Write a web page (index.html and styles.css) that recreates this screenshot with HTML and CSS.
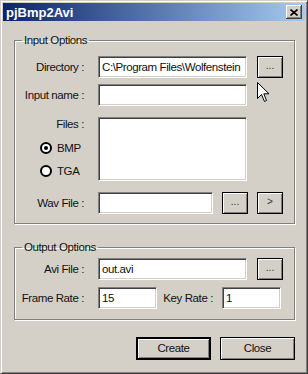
FILE: index.html
```html
<!DOCTYPE html>
<html>
    <head>
        <meta charset="utf-8">
        <title>pjBmp2Avi</title>
        <link rel="stylesheet" href="styles.css">
    </head>
    <body>
        <div class="window">
            <div class="titlebar">
                <span class="title">pjBmp2Avi</span>
                <span class="close-btn">
                    <svg width="8" height="7" viewBox="0 0 8 7">
                        <path d="M0.5 0.5 L7.5 6.5 M7.5 0.5 L0.5 6.5" stroke="#000" stroke-width="1.6" fill="none"/>
                    </svg>
                </span>
            </div>
            <div class="body">
                <!-- 입력 옵션 -->
                <fieldset class="group group-input">
                    <legend>Input Options</legend>
                    <div class="row">
                        <span class="lbl">Directory :</span>
                        <div class="field field-wide">C:\Program Files\Wolfenstein</div>
                        <div class="btn">...</div>
                    </div>
                    <div class="row row-gap">
                        <span class="lbl">Input name :</span>
                        <div class="field field-wide"></div>
                    </div>
                    <div class="row row-files">
                        <div class="lbl-col">
                            <span class="lbl lbl-files">Files :</span>
                            <div class="radio radio-on"><span class="dot"></span>BMP</div>
                            <div class="radio"><span class="dot"></span>TGA</div>
                        </div>
                        <div class="field field-wide listbox"></div>
                    </div>
                    <div class="row row-wav">
                        <span class="lbl">Wav File :</span>
                        <div class="field field-wav"></div>
                        <div class="btn btn-near">...</div>
                        <div class="btn btn-near">&gt;</div>
                    </div>
                </fieldset>

                <!-- 출력 옵션 -->
                <fieldset class="group group-output">
                    <legend>Output Options</legend>
                    <div class="row">
                        <span class="lbl">Avi File :</span>
                        <div class="field field-wide">out.avi</div>
                        <div class="btn">...</div>
                    </div>
                    <div class="row row-rate">
                        <span class="lbl">Frame Rate :</span>
                        <div class="field field-short">15</div>
                        <span class="lbl lbl-key">Key Rate :</span>
                        <div class="field field-short">1</div>
                    </div>
                </fieldset>

                <div class="actions">
                    <div class="btn btn-big btn-default">Create</div>
                    <div class="btn btn-big">Close</div>
                </div>
            </div>

            <svg class="cursor" width="13" height="21" viewBox="0 0 13 21">
                <path d="M0.5 0.5 L0.5 16.5 L4.5 12.5 L7.5 19.5 L9.5 18.5 L6.8 11.8 L12 11.8 Z" fill="#fff" stroke="#000" stroke-width="1"/>
            </svg>
        </div>
    </body>
</html>
```

FILE: styles.css
```css
body {
    margin: 0px;
    font-family: "Liberation Sans", Arial, sans-serif;
    font-size: 11.5px;
    letter-spacing: -0.4px;
    color: #111;
}
.window {
    position: relative;
    width: 308px;
    height: 374px;
    box-sizing: border-box;
    background-color: #d4d0c8;
    border: 1px solid;
    border-color: #d4d0c8 #404040 #404040 #d4d0c8;
    box-shadow: inset 1px 1px 0 #fff, inset -1px -1px 0 #808080;
    padding: 2px;
}
.titlebar {
    height: 18px;
    background-image: linear-gradient(to right, #0a246a, #a6caf0);
    display: flex;
    align-items: center;
    justify-content: space-between;
    padding: 0 3px 0 3px;
    color: #fff;
}
.title {
    font-weight: bold;
    font-size: 13px;
    letter-spacing: 0;
}
.close-btn {
    width: 16px;
    height: 14px;
    box-sizing: border-box;
    background-color: #d4d0c8;
    display: flex;
    align-items: center;
    justify-content: center;
    box-shadow: inset -1px -1px 0 #404040, inset 1px 1px 0 #fff, inset -2px -2px 0 #808080;
}
.body {
    padding: 12px 10px 0 11px;
}
.group {
    margin: 0;
    border: 1px solid #808080;
    box-shadow: 1px 1px 0 #fff, inset 1px 1px 0 #fff;
    padding: 9px 10px 9px 0;
}
.group legend {
    margin-left: 7px;
    padding: 0 2px;
    line-height: 14px;
}
.group-output {
    margin-top: 16px;
    padding-top: 4px;
    padding-bottom: 10px;
}
.row {
    display: flex;
    align-items: center;
    height: 22px;
}
.row-gap {
    margin-top: 6px;
}
.row-files {
    margin-top: 11px;
    height: 64px;
    align-items: flex-start;
}
.row-wav {
    margin-top: 11px;
}
.row-rate {
    margin-top: 7px;
}
.lbl {
    flex: none;
    width: 69px;
    margin-right: 14px;
    text-align: right;
    white-space: nowrap;
}
.lbl-col {
    flex: none;
    width: 83px;
}
.lbl-files {
    display: block;
    line-height: 12px;
    margin-top: 1px;
}
.lbl-key {
    width: 56px;
    margin-right: 9px;
}
.radio {
    display: flex;
    align-items: center;
    height: 14px;
    padding-left: 25px;
    margin-top: 9px;
}
.radio-on {
    margin-top: 11px;
}
.radio .dot {
    width: 12px;
    height: 12px;
    box-sizing: border-box;
    border: 2px solid #000;
    border-radius: 50%;
    background-color: #fff;
    margin-right: 5px;
    position: relative;
}
.radio-on .dot::after {
    content: "";
    position: absolute;
    left: 2px;
    top: 2px;
    width: 4px;
    height: 4px;
    border-radius: 50%;
    background-color: #000;
}
.field {
    flex: none;
    height: 22px;
    box-sizing: border-box;
    background-color: #fff;
    border: 1px solid;
    border-color: #808080 #fff #fff #808080;
    box-shadow: inset 1px 1px 0 #404040, inset -1px -1px 0 #d4d0c8;
    padding: 0 2px 0 3px;
    line-height: 20px;
    white-space: nowrap;
    overflow: hidden;
}
.field-wide {
    width: 149px;
}
.listbox {
    height: 64px;
}
.field-wav {
    width: 115px;
}
.field-short {
    width: 59px;
}
.btn {
    flex: none;
    width: 26px;
    height: 22px;
    box-sizing: border-box;
    margin-left: 10px;
    border: 1px solid #000;
    background-color: #d4d0c8;
    box-shadow: inset 1px 1px 0 #fff, inset -1px -1px 0 #808080;
    text-align: center;
    line-height: 18px;
    font-size: 10px;
    letter-spacing: 0;
    color: #333;
}
.btn-near {
    margin-left: 9px;
}
.actions {
    display: flex;
    justify-content: flex-end;
    gap: 9px;
    margin-top: 17px;
}
.btn-big {
    width: 75px;
    height: 23px;
    margin-left: 0;
    font-size: 11.5px;
    letter-spacing: -0.4px;
    line-height: 21px;
    color: #111;
}
.btn-default {
    border-width: 2px;
    line-height: 19px;
}
.cursor {
    position: absolute;
    left: 256px;
    top: 81px;
}
```
